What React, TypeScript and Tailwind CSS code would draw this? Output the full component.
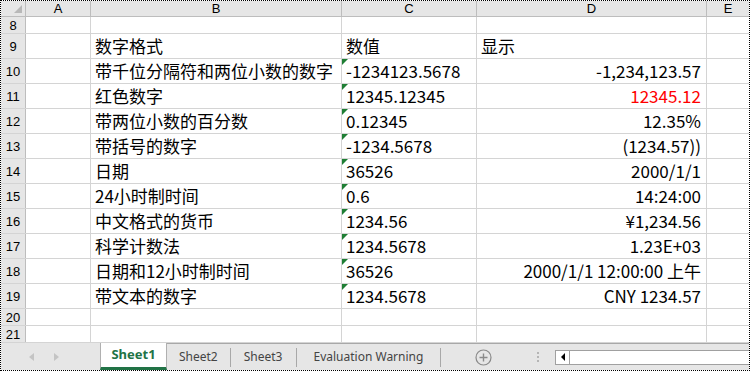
import React from "react"

const rows: { n: number; b?: string; c?: string; d?: string; red?: boolean; tri?: boolean; h: number }[] = [
  { n: 8, h: 17 },
  { n: 9, b: "数字格式", c: "数值", d: "显示", h: 25 },
  { n: 10, b: "带千位分隔符和两位小数的数字", c: "-1234123.5678", d: "-1,234,123.57", tri: true, h: 25 },
  { n: 11, b: "红色数字", c: "12345.12345", d: "12345.12", red: true, tri: true, h: 25 },
  { n: 12, b: "带两位小数的百分数", c: "0.12345", d: "12.35%", tri: true, h: 25 },
  { n: 13, b: "带括号的数字", c: "-1234.5678", d: "(1234.57))", tri: true, h: 25 },
  { n: 14, b: "日期", c: "36526", d: "2000/1/1", tri: true, h: 25 },
  { n: 15, b: "24小时制时间", c: "0.6", d: "14:24:00", tri: true, h: 25 },
  { n: 16, b: "中文格式的货币", c: "1234.56", d: "¥1,234.56", tri: true, h: 25 },
  { n: 17, b: "科学计数法", c: "1234.5678", d: "1.23E+03", tri: true, h: 25 },
  { n: 18, b: "日期和12小时制时间", c: "36526", d: "2000/1/1 12:00:00 上午", tri: true, h: 25 },
  { n: 19, b: "带文本的数字", c: "1234.5678", d: "CNY 1234.57", tri: true, h: 25 },
  { n: 20, h: 17 },
  { n: 21, h: 17 },
]

const cellFont = { fontFamily: '"Noto Sans CJK SC", "Noto Sans", sans-serif' }
const hdrFont = { fontFamily: '"Liberation Sans", Arial, sans-serif' }
const tabFont = { fontFamily: '"Noto Sans", "Open Sans", sans-serif' }

export default function App() {
  return (
    <div className="w-[750px] h-[371px] border border-dotted border-black bg-white overflow-hidden flex flex-col text-black">
      {/* column headers */}
      <div className="flex h-[16px] bg-[#e6e6e6] border-b border-[#bdbdbd] text-[13px] shrink-0" style={hdrFont}>
        <div className="w-[25px] shrink-0 border-r border-[#bdbdbd] relative">
          <div className="absolute right-[3px] bottom-[3px] w-0 h-0 border-l-[8px] border-l-transparent border-b-[8px] border-b-[#b8b8b8]" />
        </div>
        <div className="w-[65px] shrink-0 border-r border-[#bdbdbd] flex items-center justify-center leading-none">A</div>
        <div className="w-[251px] shrink-0 border-r border-[#bdbdbd] flex items-center justify-center leading-none">B</div>
        <div className="w-[135px] shrink-0 border-r border-[#bdbdbd] flex items-center justify-center leading-none">C</div>
        <div className="w-[230px] shrink-0 border-r border-[#bdbdbd] flex items-center justify-center leading-none">D</div>
        <div className="flex-1 flex items-center justify-center leading-none">E</div>
      </div>

      {rows.map((r) => (
        <div key={r.n} className="flex shrink-0 border-b border-[#d4d4d4]" style={{ height: r.h }}>
          <div
            className="w-[25px] shrink-0 bg-[#e6e6e6] border-r border-[#bdbdbd] flex items-center justify-center text-[13px] leading-none"
            style={hdrFont}
          >
            {r.n}
          </div>
          <div className="w-[65px] shrink-0 border-r border-[#d4d4d4]" />
          <div className="w-[251px] shrink-0 border-r border-[#d4d4d4] flex items-center pl-[4px] pb-[1px] text-[17px] leading-none whitespace-nowrap" style={cellFont}>
            {r.b}
          </div>
          <div className="w-[135px] shrink-0 border-r border-[#d4d4d4] relative flex items-center pl-[4px] pb-[1px] text-[17px] leading-none whitespace-nowrap" style={cellFont}>
            {r.tri && (
              <div className="absolute left-0 top-0 w-0 h-0 border-t-[6px] border-t-[#1e7e34] border-r-[6px] border-r-transparent" />
            )}
            {r.c}
          </div>
          {r.n === 9 ? (
            <div className="w-[230px] shrink-0 border-r border-[#d4d4d4] flex items-center pl-[4px] pb-[1px] text-[17px] leading-none" style={cellFont}>
              {r.d}
            </div>
          ) : (
            <div
              className={`w-[230px] shrink-0 border-r border-[#d4d4d4] flex items-center justify-end pr-[5px] pb-[1px] text-[17px] leading-none whitespace-nowrap ${r.red ? "text-[#ff0000]" : ""}`}
              style={cellFont}
            >
              {r.d}
            </div>
          )}
          <div className="flex-1" />
        </div>
      ))}

      {/* sheet tabs */}
      <div className="flex-1 bg-[#e6e6e6] flex items-stretch relative text-[12px] text-[#444]" style={tabFont}>
        <div className="w-[99px] shrink-0 flex items-center gap-[20px] pl-[28px]">
          <div className="w-0 h-0 border-y-[4px] border-y-transparent border-r-[5px] border-r-[#c4c4c4]" />
          <div className="w-0 h-0 border-y-[4px] border-y-transparent border-l-[5px] border-l-[#c4c4c4]" />
        </div>
        <div className="flex-1 flex items-stretch border-t border-[#a8a8a8]">
          <div className="w-[67px] -mt-px bg-white border-x border-[#b0b0b0] border-b-[3px] border-b-[#217346] flex items-center justify-center font-bold text-[#217346] text-[13px]">
            Sheet1
          </div>
          <div className="flex items-center">
            <span className="px-[12px]">Sheet2</span>
            <span className="w-px h-[19px] bg-[#a8a8a8]" />
            <span className="px-[13px]">Sheet3</span>
            <span className="w-px h-[19px] bg-[#a8a8a8]" />
            <span className="px-[17px]">Evaluation Warning</span>
            <span className="w-px h-[19px] bg-[#a8a8a8]" />
          </div>
          <div className="flex items-center ml-[34px]">
            <svg width="17" height="17" viewBox="0 0 17 17">
              <circle cx="8.5" cy="8.5" r="7.5" fill="none" stroke="#8a8a8a" strokeWidth="1.2" />
              <path d="M8.5 4.5v8M4.5 8.5h8" stroke="#8a8a8a" strokeWidth="1.4" />
            </svg>
          </div>
          <div className="flex flex-col justify-center gap-[2px] ml-[45px]">
            <span className="w-[2px] h-[2px] bg-[#b5b5b5]" />
            <span className="w-[2px] h-[2px] bg-[#b5b5b5]" />
            <span className="w-[2px] h-[2px] bg-[#b5b5b5]" />
          </div>
          <div className="flex-1 ml-[16px] flex items-center">
            <div className="w-full h-[15px] bg-white border border-[#a0a0a0] border-r-0 flex">
              <div className="w-[14px] border-r border-[#a0a0a0] flex items-center justify-center">
                <div className="w-0 h-0 border-y-[4px] border-y-transparent border-r-[4px] border-r-black" />
              </div>
            </div>
          </div>
        </div>
      </div>
    </div>
  )
}
